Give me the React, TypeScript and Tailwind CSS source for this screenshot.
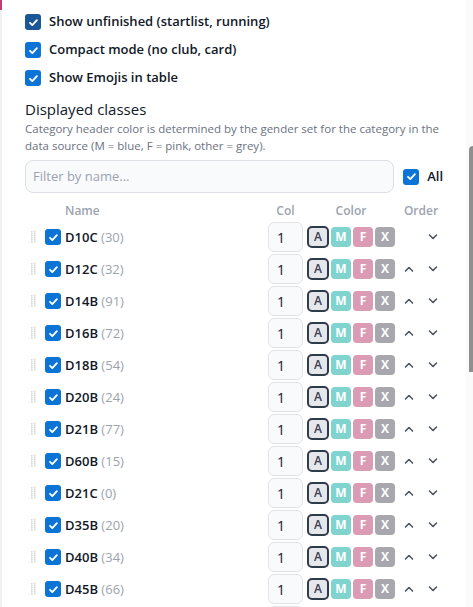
import React from "react";

type ClassRow = { name: string; count: number };

const rows: ClassRow[] = [
  { name: "D10C", count: 30 },
  { name: "D12C", count: 32 },
  { name: "D14B", count: 91 },
  { name: "D16B", count: 72 },
  { name: "D18B", count: 54 },
  { name: "D20B", count: 24 },
  { name: "D21B", count: 77 },
  { name: "D60B", count: 15 },
  { name: "D21C", count: 0 },
  { name: "D35B", count: 20 },
  { name: "D40B", count: 34 },
  { name: "D45B", count: 66 },
];

const Check = ({ dark = false }: { dark?: boolean }) => (
  <span
    className={`flex h-4 w-4 shrink-0 items-center justify-center rounded-[3px] ${
      dark ? "bg-[#1b5796]" : "bg-[#0b74d6]"
    }`}
  >
    <svg width="11" height="11" viewBox="0 0 12 12" fill="none">
      <path d="M2.2 6.3l2.5 2.5 5-5.3" stroke="white" strokeWidth="2" strokeLinecap="round" strokeLinejoin="round" />
    </svg>
  </span>
);

const Grip = () => (
  <svg width="5" height="12" viewBox="0 0 5 12" className="text-[#d4d6da]">
    {[0, 2, 4, 6, 8, 10].map((y) => (
      <g key={y}>
        <rect x="0" y={y} width="1.5" height="1.5" fill="currentColor" />
        <rect x="3" y={y} width="1.5" height="1.5" fill="currentColor" />
      </g>
    ))}
  </svg>
);

const Chevron = ({ up = false }: { up?: boolean }) => (
  <svg width="10" height="6" viewBox="0 0 10 6" fill="none">
    <path
      d={up ? "M1.5 5L5 1.5 8.5 5" : "M1.5 1L5 4.5 8.5 1"}
      stroke="#4b5563"
      strokeWidth="1.6"
      strokeLinecap="round"
      strokeLinejoin="round"
    />
  </svg>
);

const ColInput = ({ value }: { value?: string }) => (
  <div className="flex h-[30px] w-[35px] shrink-0 items-center rounded-md border border-[#e2e4e8] bg-[#f9fafb] pl-2 text-[14px] text-[#111827]">
    {value}
  </div>
);

const Row = ({ row, first }: { row: ClassRow; first: boolean }) => (
  <div className="flex h-8 items-center">
    <div className="flex w-5 pl-[6px]">
      <Grip />
    </div>
    <Check />
    <div className="ml-1 flex-1 text-[13px] leading-none">
      <span className="font-semibold text-[#111827]">{row.name}</span>{" "}
      <span className="text-[#9ca3af]">({row.count})</span>
    </div>
    <ColInput value="1" />
    <div className="ml-1 flex items-center gap-[2px] text-[12px] font-bold">
      <span className="flex h-[22px] w-[22px] items-center justify-center rounded-[5px] border-2 border-[#2f3a4a] bg-[#e5e7eb] font-semibold text-[#374151]">
        A
      </span>
      <span className="flex h-5 w-5 items-center justify-center rounded-[4px] bg-[#80d4cf] text-white">M</span>
      <span className="flex h-5 w-5 items-center justify-center rounded-[4px] bg-[#db9bb4] text-white">F</span>
      <span className="flex h-5 w-5 items-center justify-center rounded-[4px] bg-[#a9a7ae] text-white">X</span>
    </div>
    <div className="ml-1 flex items-center gap-1">
      <span className="flex w-5 justify-center">{!first && <Chevron up />}</span>
      <span className="flex w-5 justify-center">
        <Chevron />
      </span>
    </div>
  </div>
);

const Option = ({ label, dark = false }: { label: string; dark?: boolean }) => (
  <div className="flex h-7 items-center gap-2">
    <Check dark={dark} />
    <span className="text-[13px] font-semibold text-[#111827]">{label}</span>
  </div>
);

export default function App() {
  return (
    <div
      className="flex h-[607px] w-[473px] overflow-hidden bg-white"
      style={{ fontFamily: '"Open Sans", "Noto Sans", sans-serif' }}
    >
      <div className="flex w-[2px] flex-col bg-[#eef0f2]">
        <div className="h-[10px] bg-[#c23a6e]" />
      </div>
      <div className="flex-1 px-[23px] pt-2">
        <Option label="Show unfinished (startlist, running)" dark />
        <Option label="Compact mode (no club, card)" />
        <Option label="Show Emojis in table" />

        <h2 className="mt-[6px] text-[15px] leading-[22px] text-[#111827]">Displayed classes</h2>
        <p className="text-[11.5px] leading-[17px] text-[#6b7280]">
          Category header color is determined by the gender set for the category in the data source (M = blue, F =
          pink, other = grey).
        </p>

        <div className="mt-[6px] flex items-center">
          <div className="flex h-[33px] flex-1 items-center rounded-lg border border-[#dcdfe4] bg-[#f9fafb] px-[7px] text-[13px] text-[#9ca3af]">
            Filter by name...
          </div>
          <div className="ml-[9px] flex items-center gap-2">
            <Check />
            <span className="text-[13px] font-semibold text-[#111827]">All</span>
          </div>
        </div>

        <div className="mt-2 flex h-5 items-center text-[12px] font-semibold text-[#9ca3af]">
          <span className="flex-1 pl-10">Name</span>
          <span className="w-[35px] text-center">Col</span>
          <span className="ml-1 w-[88px] text-center">Color</span>
          <span className="ml-1 w-11 text-center">Order</span>
        </div>

        {rows.map((r, i) => (
          <Row key={r.name} row={r} first={i === 0} />
        ))}
        <div className="flex pt-[1px] pl-[243px]">
          <ColInput />
        </div>
      </div>
      <div className="flex w-[7px] bg-[#fafafa] pt-[146px]">
        <div className="ml-[3px] h-[226px] w-1 rounded-tl-sm bg-[#8f8f8f]" />
      </div>
    </div>
  );
}
